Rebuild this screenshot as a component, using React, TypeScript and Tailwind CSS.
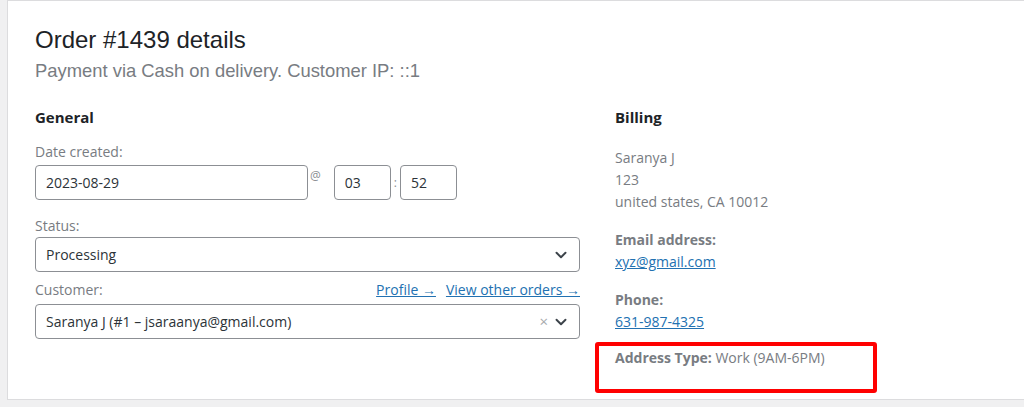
import { ChevronDown } from "lucide-react"

const sans = { fontFamily: '"Open Sans", "Noto Sans", sans-serif' }

function Field({ value, className = "" }: { value: string; className?: string }) {
  return (
    <div
      className={`flex items-center h-[35px] px-[10px] border border-[#8c8f94] rounded-[4px] text-[#2c3338] ${className}`}
    >
      {value}
    </div>
  )
}

function SelectBox({ value, clearable = false }: { value: string; clearable?: boolean }) {
  return (
    <div className="flex items-center h-[35px] pl-[10px] pr-[9px] border border-[#8c8f94] rounded-[4px] text-[#2c3338]">
      <span className="flex-1">{value}</span>
      {clearable && <span className="text-[#a7aaad] text-[15px] mr-[4px] leading-none">×</span>}
      <ChevronDown size={18} strokeWidth={2.6} className="text-[#3c434a]" />
    </div>
  )
}

export default function App() {
  return (
    <div className="w-[1024px] h-[407px] bg-[#f0f0f1] overflow-hidden">
      <div className="ml-[7px] h-[400px] bg-white border-l border-t border-b border-[#dcdcde] pl-[27px] pt-[24px]">
        {/* Heading */}
        <h2
          className="text-[24px] leading-[30px] text-[#1d2327]"
          style={{ fontFamily: '"Liberation Sans", Arial, sans-serif' }}
        >
          Order #1439 details
        </h2>
        <p
          className="text-[18.4px] leading-[24px] text-[#787c82] mt-[4px]"
          style={{ fontFamily: '"Liberation Sans", Arial, sans-serif' }}
        >
          Payment via Cash on delivery. Customer IP: ::1
        </p>

        <div className="flex gap-[35px] mt-[24px] text-[14px]" style={sans}>
          {/* General column */}
          <div className="w-[545px] flex flex-col">
            <h3 className="font-bold text-[15px] leading-[20px] text-[#1d2327]">General</h3>

            <div className="mt-[15px] leading-[20px] text-[#787c82]">Date created:</div>
            <div className="flex items-center mt-[3px]">
              <Field value="2023-08-29" className="w-[273px]" />
              <span className="ml-[2px] self-start mt-[2px] text-[12px] text-[#8c8f94]">@</span>
              <Field value="03" className="w-[57px] ml-[13px]" />
              <span className="mx-[3px] text-[12px] text-[#8c8f94]">:</span>
              <Field value="52" className="w-[57px]" />
            </div>

            <div className="mt-[16px] leading-[20px] text-[#787c82]">Status:</div>
            <div className="mt-[1px]">
              <SelectBox value="Processing" />
            </div>

            <div className="flex items-center mt-[8px] leading-[20px]">
              <span className="flex-1 text-[#787c82]">Customer:</span>
              <a className="text-[#2271b1] underline">Profile →</a>
              <a className="ml-[10px] text-[#2271b1] underline">View other orders →</a>
            </div>
            <div className="mt-[4px]">
              <SelectBox value="Saranya J (#1 – jsaraanya@gmail.com)" clearable />
            </div>
          </div>

          {/* Billing column */}
          <div className="flex flex-col">
            <h3 className="font-bold text-[15px] leading-[20px] text-[#1d2327]">Billing</h3>

            <div className="mt-[20px] leading-[22px] text-[#787c82]">
              <p>Saranya J</p>
              <p>123</p>
              <p>united states, CA 10012</p>
            </div>

            <div className="mt-[16px] leading-[22px] text-[#787c82]">
              <p className="font-bold">Email address:</p>
              <a className="text-[#2271b1] underline">xyz@gmail.com</a>
            </div>

            <div className="mt-[16px] leading-[22px] text-[#787c82]">
              <p className="font-bold">Phone:</p>
              <a className="text-[#2271b1] underline">631-987-4325</a>
            </div>

            {/* Highlighted address type */}
            <div className="ml-[-20px] mt-[9px] w-[282px] h-[51px] shrink-0 border-[4px] border-[#ff0000] rounded-[3px] pl-[16px] pt-[1px] leading-[22px] text-[#787c82]">
              <span className="font-bold">Address Type:</span> Work (9AM-6PM)
            </div>
          </div>
        </div>
      </div>
    </div>
  )
}
